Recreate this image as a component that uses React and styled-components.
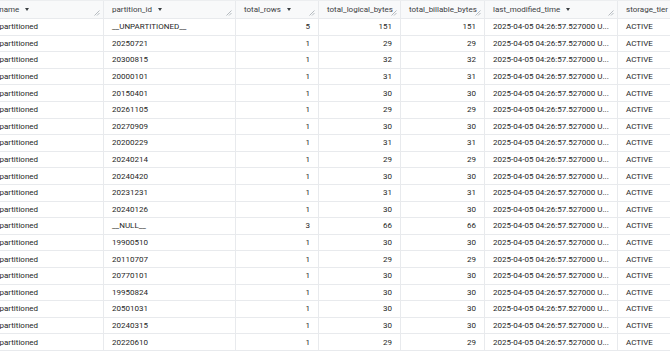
import React from 'react';
import styled, { createGlobalStyle } from 'styled-components';

const GlobalStyle = createGlobalStyle`
  html, body {
    margin: 0;
    padding: 0;
    background: #ffffff;
  }
  * {
    box-sizing: border-box;
  }
`;

// first column is partly scrolled out of view on the left
const COLS = '134px 132px 83px 82px 84px 133px 120px';

const Viewport = styled.div`
  width: 670px;
  height: 360px;
  overflow: hidden;
  background: #fff;
  font-family: Roboto, "Liberation Sans", sans-serif;
  font-size: 8px;
  color: #1f1f1f;
`;

const Table = styled.div`
  margin-left: -30px;
  width: max-content;
`;

const Row = styled.div`
  display: grid;
  grid-template-columns: ${COLS};
  height: ${p => (p.$head ? '19px' : '16.6px')};
  background: ${p => (p.$head ? '#f8f9fa' : '#fff')};
  border-bottom: 1px solid #e8eaed;
  border-top: ${p => (p.$head ? '1px solid #eceef0' : 'none')};
`;

const Cell = styled.div`
  display: flex;
  align-items: center;
  justify-content: ${p => (p.$num ? 'flex-end' : 'flex-start')};
  padding: 0 8px;
  border-right: 1px solid #e8eaed;
  white-space: nowrap;
  overflow: hidden;
  position: relative;
`;

const HeadCell = styled(Cell)`
  color: #3c4043;
  padding-right: 12px;
`;

const SortArrow = styled.span`
  display: inline-block;
  margin-left: 6px;
  width: 0;
  height: 0;
  border-left: 2.5px solid transparent;
  border-right: 2.5px solid transparent;
  border-top: 3px solid #3c4043;
`;

// drag handle shown in the corner of each header cell
const Grip = styled.svg`
  position: absolute;
  right: 3px;
  bottom: 2px;
  width: 6px;
  height: 6px;
`;

const Handle = () => (
  <Grip viewBox="0 0 6 6">
    <line x1="0.5" y1="5.5" x2="5.5" y2="0.5" stroke="#9aa0a6" strokeWidth="0.7" />
    <line x1="3" y1="5.5" x2="5.5" y2="3" stroke="#9aa0a6" strokeWidth="0.7" />
  </Grip>
);

const headers = [
  { label: 'table_name', sort: true },
  { label: 'partition_id', sort: true },
  { label: 'total_rows', sort: true },
  { label: 'total_logical_bytes', sort: false },
  { label: 'total_billable_bytes', sort: false },
  { label: 'last_modified_time', sort: true },
  { label: 'storage_tier', sort: false },
];

const rows = [
  ['__UNPARTITIONED__', 5, 151],
  ['20250721', 1, 29],
  ['20300815', 1, 32],
  ['20000101', 1, 31],
  ['20150401', 1, 30],
  ['20261105', 1, 29],
  ['20270909', 1, 30],
  ['20200229', 1, 31],
  ['20240214', 1, 29],
  ['20240420', 1, 30],
  ['20231231', 1, 31],
  ['20240126', 1, 30],
  ['__NULL__', 3, 66],
  ['19900510', 1, 30],
  ['20110707', 1, 29],
  ['20770101', 1, 30],
  ['19950824', 1, 30],
  ['20501031', 1, 30],
  ['20240315', 1, 30],
  ['20220610', 1, 29],
];

const App = () => (
  <Viewport>
    <GlobalStyle />
    <Table>
      <Row $head>
        {headers.map(h => (
          <HeadCell key={h.label}>
            {h.label}
            {h.sort && <SortArrow />}
            <Handle />
          </HeadCell>
        ))}
      </Row>
      {rows.map(([id, count, bytes]) => (
        <Row key={id}>
          <Cell>tbl_unpartitioned</Cell>
          <Cell>{id}</Cell>
          <Cell $num>{count}</Cell>
          <Cell $num>{bytes}</Cell>
          <Cell $num>{bytes}</Cell>
          <Cell>2025-04-05 04:26:57.527000 U...</Cell>
          <Cell>ACTIVE</Cell>
        </Row>
      ))}
    </Table>
  </Viewport>
);

export default App;
